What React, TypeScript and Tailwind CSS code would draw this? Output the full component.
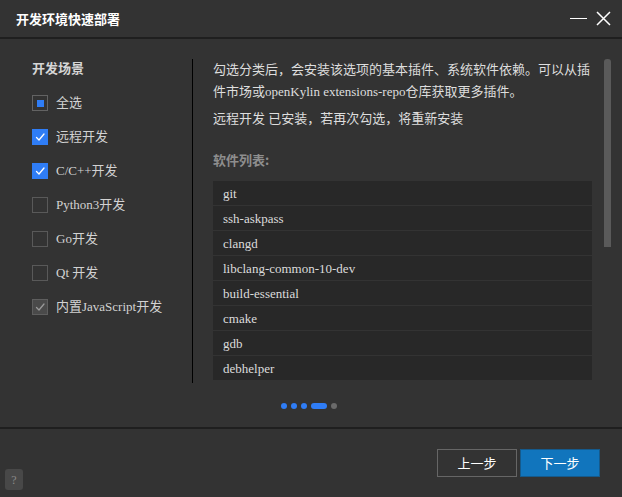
import React from "react";

type TScene = {
  label: string;
  state: "partial" | "checked" | "none" | "disabled";
};

const scenes: TScene[] = [
  { label: "全选", state: "partial" },
  { label: "远程开发", state: "checked" },
  { label: "C/C++开发", state: "checked" },
  { label: "Python3开发", state: "none" },
  { label: "Go开发", state: "none" },
  { label: "Qt 开发", state: "none" },
  { label: "内置JavaScript开发", state: "disabled" },
];

const packages = [
  "git",
  "ssh-askpass",
  "clangd",
  "libclang-common-10-dev",
  "build-essential",
  "cmake",
  "gdb",
  "debhelper",
];

function CheckMark({ color }: { color: string }) {
  return (
    <svg width="12" height="12" viewBox="0 0 12 12" fill="none">
      <path d="M2.5 6.5 L5 9 L10 3" stroke={color} strokeWidth="1.3" strokeLinecap="round" strokeLinejoin="round" />
    </svg>
  );
}

function Box({ state }: { state: TScene["state"] }) {
  if (state === "checked") {
    return (
      <div className="w-4 h-4 bg-[#2f7df6] flex items-center justify-center">
        <CheckMark color="#ffffff" />
      </div>
    );
  }
  if (state === "disabled") {
    return (
      <div className="w-4 h-4 bg-[#4a4a4a] border border-[#5e5e5e] flex items-center justify-center">
        <CheckMark color="#9a9a9a" />
      </div>
    );
  }
  if (state === "partial") {
    return (
      <div className="w-4 h-4 border border-[#636363] flex items-center justify-center">
        <div className="w-[7px] h-[7px] bg-[#2f7df6]" />
      </div>
    );
  }
  return <div className="w-4 h-4 border border-[#595959]" />;
}

export default function App() {
  return (
    <div
      className="w-[622px] h-[497px] bg-[#333333] flex flex-col text-[#d6d6d6]"
      style={{ fontFamily: '"Liberation Serif", "Noto Sans CJK SC", serif' }}
    >
      {/* Title bar */}
      <div className="h-[39px] flex items-center pl-4 pr-[11px] border-b-2 border-[#1f1f1f] shrink-0">
        <span
          className="flex-1 text-[13px] font-bold text-white"
          style={{ fontFamily: '"Noto Sans CJK SC", sans-serif' }}
        >
          开发环境快速部署
        </span>
        <div className="w-[17px] h-[1.5px] bg-white mr-[9px]" />
        <svg width="15" height="15" viewBox="0 0 15 15">
          <path d="M1 1 L14 14 M14 1 L1 14" stroke="#ffffff" strokeWidth="1.5" />
        </svg>
      </div>

      {/* Body */}
      <div className="flex flex-col flex-1">
        <div className="flex pt-[20px]">
          {/* Left scenes */}
          <div className="w-[193px] h-[324px] border-r border-black pl-8 shrink-0">
            <div
              className="text-[13px] font-bold leading-[18px] text-[#d6d6d6]"
              style={{ fontFamily: '"Noto Sans CJK SC", sans-serif' }}
            >
              开发场景
            </div>
            <div className="flex flex-col mt-[18px] gap-[18px]">
              {scenes.map((s) => (
                <div key={s.label} className="flex items-center h-4 gap-2">
                  <Box state={s.state} />
                  <span className="text-[13px] leading-4 text-[#d2d2d2]">{s.label}</span>
                </div>
              ))}
            </div>
          </div>

          {/* Right content */}
          <div className="w-[379px] ml-[20px] shrink-0">
            <p className="text-[13px] leading-[22px] text-[#dedede]">
              <span className="block whitespace-nowrap text-justify [text-align-last:justify] w-[377px]">
                勾选分类后，会安装该选项的基本插件、系统软件依赖。可以从插
              </span>
              <span className="block">件市场或openKylin extensions-repo仓库获取更多插件。</span>
            </p>
            <p className="text-[13px] leading-[22px] mt-[5px] text-[#dedede]">
              远程开发 已安装，若再次勾选，将重新安装
            </p>
            <div
              className="text-[13px] font-bold leading-[20px] mt-[20px] text-[#8e8e8e]"
              style={{ fontFamily: '"Noto Sans CJK SC", sans-serif' }}
            >
              软件列表:
            </div>
            <div className="mt-[11px] flex flex-col gap-px">
              {packages.map((p) => (
                <div key={p} className="h-6 bg-[#282828] flex items-center pl-[10px] pt-px text-[13px] text-[#dcdcdc]">
                  {p}
                </div>
              ))}
            </div>
          </div>

          {/* Scrollbar */}
          <div className="w-[7px] h-[188px] bg-[#5a5a5a] rounded-t-[3px] ml-[12px]" />
        </div>

        {/* Pager dots */}
        <div className="flex justify-center pr-[4px] mt-[20px] gap-1 items-center">
          <div className="w-[6px] h-[6px] rounded-full bg-[#2f7df6]" />
          <div className="w-[6px] h-[6px] rounded-full bg-[#2f7df6]" />
          <div className="w-[6px] h-[6px] rounded-full bg-[#2f7df6]" />
          <div className="w-[16px] h-[6px] rounded-full bg-[#2f7df6]" />
          <div className="w-[6px] h-[6px] rounded-full bg-[#6a6a6a]" />
        </div>
      </div>

      {/* Footer */}
      <div className="h-[70px] border-t-2 border-[#1f1f1f] shrink-0 flex flex-col">
        <div
          className="flex justify-end gap-[3px] pr-[22px] pt-[20px]"
          style={{ fontFamily: '"Noto Sans CJK SC", sans-serif' }}
        >
          <button className="w-[80px] h-[28px] border border-[#666666] text-white text-[13px] flex items-center justify-center">
            上一步
          </button>
          <button className="w-[80px] h-[28px] border border-[#155a8c] bg-[#1175bd] text-white text-[13px] flex items-center justify-center">
            下一步
          </button>
        </div>
        <div className="pl-[5px] mt-[-8px]">
          <div className="w-[18px] h-[21px] bg-[#484848] rounded-[3px] flex items-center justify-center text-[12px] text-[#8a8a8a]">
            ?
          </div>
        </div>
      </div>
    </div>
  );
}
